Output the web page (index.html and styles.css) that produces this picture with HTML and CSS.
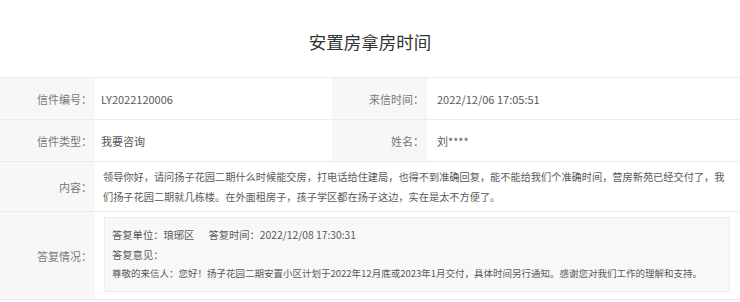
FILE: index.html
```html
<!DOCTYPE html>
<html lang="zh-CN">
<head>
    <meta charset="UTF-8">
    <meta name="viewport" content="width=device-width, initial-scale=1.0">
    <title>安置房拿房时间</title>
    <link rel="stylesheet" href="styles.css">
</head>
<body>

    <div id="page">
        <h1 class="title">安置房拿房时间</h1>

        <div class="letter">
            <div class="row">
                <div class="label">信件编号：</div>
                <div class="value">LY2022120006</div>
                <div class="label">来信时间：</div>
                <div class="value value-wide">2022/12/06 17:05:51</div>
            </div>
            <div class="row">
                <div class="label">信件类型：</div>
                <div class="value">我要咨询</div>
                <div class="label">姓名：</div>
                <div class="value value-wide">刘****</div>
            </div>
            <div class="row row-full">
                <div class="label">内容：</div>
                <div class="value content">领导你好，请问扬子花园二期什么时候能交房，打电话给住建局，也得不到准确回复，能不能给我们个准确时间，营房新苑已经交付了，我们扬子花园二期就几栋楼。在外面租房子，孩子学区都在扬子这边，实在是太不方便了。</div>
            </div>
            <div class="row row-full row-reply">
                <div class="label">答复情况：</div>
                <div class="value">
                    <div class="reply">
                        <p class="reply-head">答复单位：琅琊区<span class="gap"></span>答复时间：2022/12/08 17:30:31</p>
                        <p class="reply-head">答复意见：</p>
                        <p class="reply-text">尊敬的来信人：您好！扬子花园二期安置小区计划于2022年12月底或2023年1月交付，具体时间另行通知。感谢您对我们工作的理解和支持。</p>
                    </div>
                </div>
            </div>
        </div>
    </div>

</body>
</html>
```

FILE: styles.css
```css
body {
    margin: 0;
    background-color: #fff;
    font-family: "Noto Sans CJK SC", "Noto Sans", sans-serif;
    color: #555;
}

#page {
    width: 740px;
}

.title {
    margin: 0;
    height: 77px;
    line-height: 84px;
    font-size: 17.5px;
    font-weight: normal;
    color: #333;
    text-align: center;
}

.letter {
    border-top: 1px solid #ececec;
}

.row {
    display: grid;
    grid-template-columns: 95px 237px 95px 1fr;
    border-bottom: 1px solid #ececec;
}

.row-full {
    grid-template-columns: 95px 1fr;
}

.label {
    display: flex;
    align-items: center;
    justify-content: flex-end;
    padding-right: 3px;
    background-color: #f7f7f7;
    font-size: 11px;
    color: #777;
}

.value {
    padding: 11px 8px 10px 6px;
    font-size: 11px;
    line-height: 20px;
    color: #595959;
}

.value-wide {
    padding-left: 10px;
}

.content {
    padding: 5px 10px 4px 8px;
    font-size: 10.2px;
    line-height: 20px;
}

.row-reply .value {
    padding: 5px 10px 7px 9px;
}

.reply {
    padding: 7px 9px 9px 7px;
    background-color: #f8f8f8;
    border: 1px solid #ededed;
}

.reply p {
    margin: 0;
}

.reply-head {
    font-size: 10.3px;
    line-height: 20px;
}

.gap {
    display: inline-block;
    width: 14px;
}

.reply-text {
    font-size: 9.5px;
    line-height: 17px;
}
```
